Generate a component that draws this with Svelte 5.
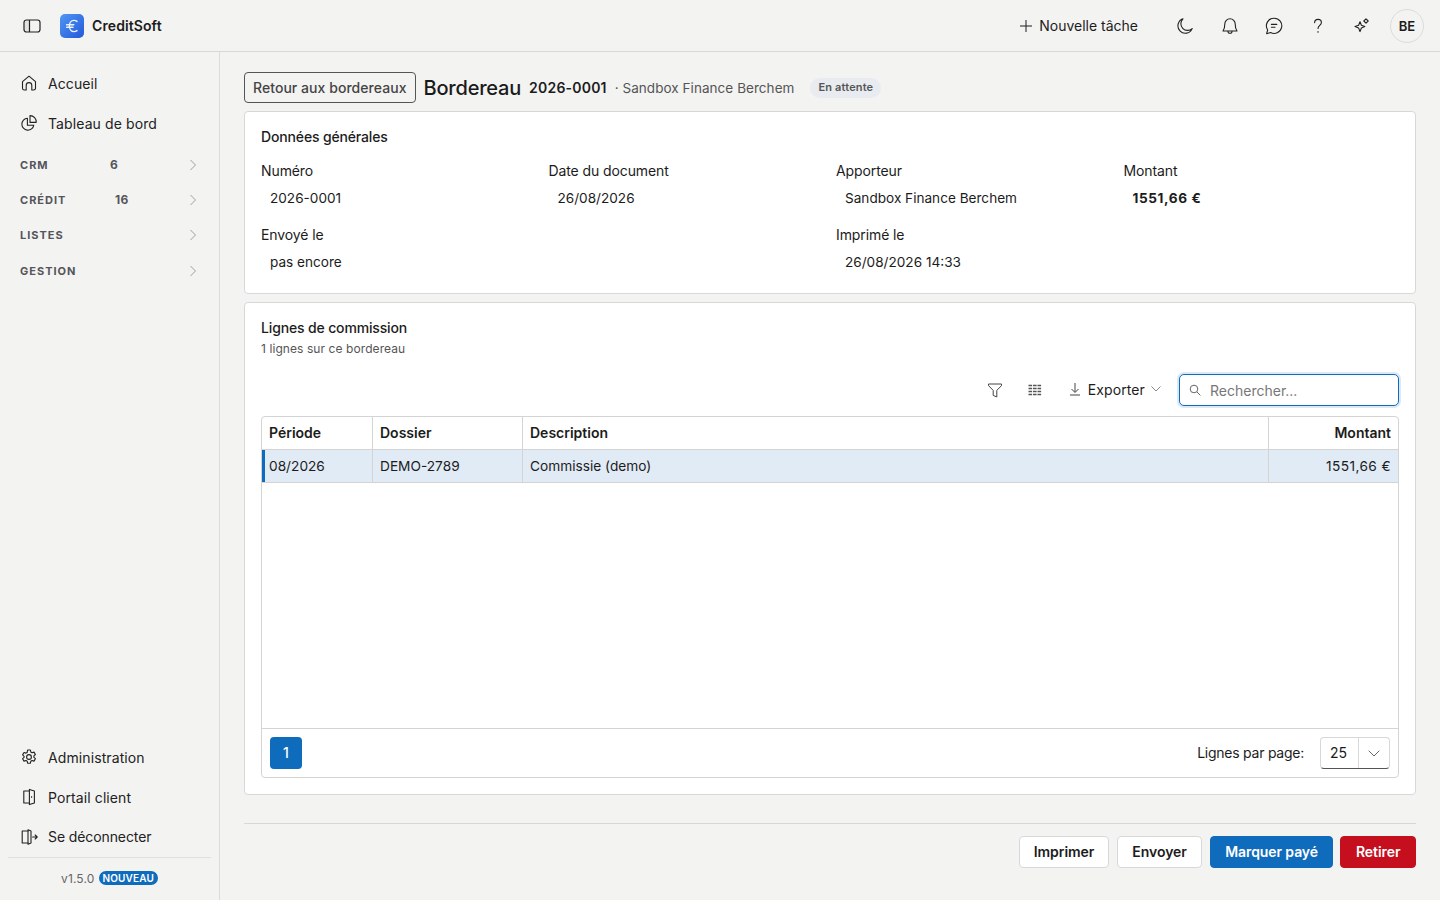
<script lang="ts">
  const fields = [
    { label: 'Numéro', value: '2026-0001' },
    { label: 'Date du document', value: '26/08/2026' },
    { label: 'Apporteur', value: 'Sandbox Finance Berchem' },
    { label: 'Montant', value: '1551,66 €', strong: true },
    { label: 'Envoyé le', value: 'pas encore', wide: true },
    { label: 'Imprimé le', value: '26/08/2026 14:33', wide: true }
  ];
  const groups = [
    { name: 'CRM', count: '6', width: 90 },
    { name: 'CRÉDIT', count: '16', width: 95 },
    { name: 'LISTES', count: '' },
    { name: 'GESTION', count: '' }
  ];
</script>

<div class="app">
  <header class="topbar">
    <button class="icon-btn toggle" aria-label="Menu">
      <svg width="18" height="18" viewBox="0 0 18 18" fill="none" stroke="currentColor" stroke-width="1.2"><rect x="1" y="3" width="16" height="12" rx="2.5"/><path d="M6.5 3v12"/><path d="M1.5 5.5A2 2 0 0 1 3.5 3.5h3v11h-3a2 2 0 0 1-2-2z" fill="currentColor" fill-opacity=".08" stroke="none"/></svg>
    </button>
    <div class="logo">
      <svg width="24" height="24" viewBox="0 0 24 24" fill="none">
        <defs><linearGradient id="lg" x1="0" y1="0" x2="1" y2="1"><stop offset="0" stop-color="#4f97f5"/><stop offset="1" stop-color="#2458d8"/></linearGradient></defs>
        <rect width="24" height="24" rx="5" fill="url(#lg)"/>
        <path d="M17 7.4a5 5 0 0 0-3-1c-2.8 0-4.6 2.4-4.6 5.6s1.8 5.6 4.6 5.6c1.2 0 2.2-.4 3-1M6.6 10.7h7.2M6.6 13.3h6.4" stroke="#eaf3ff" stroke-width="1.4" stroke-linecap="round"/>
      </svg>
    </div>
    <span class="brand">CreditSoft</span>
    <div class="top-actions">
      <button class="new-task">
        <svg width="14" height="14" viewBox="0 0 14 14" fill="none" stroke="currentColor" stroke-width="1"><path d="M7 1v12M1 7h12"/></svg>
        Nouvelle tâche
      </button>
      <span class="icons">
        <svg width="18" height="18" viewBox="0 0 18 18" fill="none" stroke="currentColor" stroke-width="1.1" stroke-linejoin="round"><path d="M6 1.8a7.4 7.4 0 1 0 9.2 9.8A6.6 6.6 0 0 1 6 1.8z"/></svg>
        <svg width="18" height="18" viewBox="0 0 18 18" fill="none" stroke="currentColor" stroke-width="1.1" stroke-linejoin="round" stroke-linecap="round"><path d="M3.8 7a5.2 5.2 0 0 1 10.4 0c0 3.4.6 5.4 1.8 7H2c1.2-1.6 1.8-3.6 1.8-7z"/><path d="M7 14.2c0 2.8 4 2.8 4 0"/></svg>
        <svg width="18" height="18" viewBox="0 0 18 18" fill="none" stroke="currentColor" stroke-width="1.1" stroke-linejoin="round" stroke-linecap="round"><path d="M9.2 1.2a7.6 7.6 0 1 1-3.6 14.3l-4 1.2 1.1-3.7A7.6 7.6 0 0 1 9.2 1.2z"/><path d="M6.4 7.4h5.4M6.4 10.2h3.6"/></svg>
        <svg width="18" height="18" viewBox="0 0 18 18" fill="none" stroke="currentColor" stroke-width="1.1" stroke-linecap="round"><path d="M5.6 5.6C5.7 3.6 7.2 2.4 9 2.4c2 0 3.4 1.2 3.4 3 0 2.8-3.4 3-3.4 6"/><path d="M9 14.6v.6"/></svg>
        <svg width="18" height="18" viewBox="0 0 18 18" fill="none" stroke="currentColor" stroke-width="1.1" stroke-linejoin="round"><path d="M7 4.8l1.4 3.4 3.4 1.4-3.4 1.4L7 14.6l-1.4-3.6L2 9.6l3.6-1.4z"/><path d="M13 1.8l2.2 2.2-2.2 2.2L10.8 4z"/></svg>
      </span>
      <span class="avatar">BE</span>
    </div>
  </header>

  <div class="shell">
    <aside class="sidebar">
      <nav class="nav-top">
        <a class="nav-item">
          <svg width="18" height="18" viewBox="0 0 18 18" fill="none" stroke="currentColor" stroke-width="1.1" stroke-linejoin="round"><path d="M2.5 7.6 9 2.2l6.5 5.4v6.6a1.8 1.8 0 0 1-1.8 1.8h-1.9v-4.6a2.8 2.8 0 0 0-5.6 0V16H4.3a1.8 1.8 0 0 1-1.8-1.8z"/></svg>
          Accueil
        </a>
        <a class="nav-item">
          <svg width="18" height="18" viewBox="0 0 18 18" fill="none" stroke="currentColor" stroke-width="1.1" stroke-linejoin="round"><path d="M7.4 4.2a6 6 0 1 0 6.4 7H7.4z"/><path d="M10 1.6a6.2 6.2 0 0 1 6.2 6.8H10z"/></svg>
          Tableau de bord
        </a>
        <div class="groups">
          {#each groups as g}
            <div class="group">
              <span class="group-name" style={g.width ? `width:${g.width}px` : ''}>{g.name}</span>
              {#if g.count}<span class="group-count">{g.count}</span>{/if}
              <svg class="chev" width="8" height="12" viewBox="0 0 8 12" fill="none" stroke="currentColor" stroke-width="1"><path d="M1.5 1l5 5-5 5"/></svg>
            </div>
          {/each}
        </div>
      </nav>
      <nav class="nav-bottom">
        <a class="nav-item">
          <svg width="18" height="18" viewBox="0 0 18 18" fill="none" stroke="currentColor" stroke-width="1.1" stroke-linejoin="round"><path d="M7.6 2h2.8l.4 2 1.2.7 2-.6 1.4 2.4-1.5 1.4v1.4l1.5 1.4-1.4 2.4-2-.6-1.2.7-.4 2H7.6l-.4-2-1.2-.7-2 .6-1.4-2.4 1.5-1.4V8.3L2.6 6.9 4 4.5l2 .6 1.2-.7z"/><circle cx="9" cy="9" r="2.4"/></svg>
          Administration
        </a>
        <a class="nav-item">
          <svg width="18" height="18" viewBox="0 0 18 18" fill="none" stroke="currentColor" stroke-width="1.1" stroke-linejoin="round"><path d="M9.4 3H3.8v12h5.6"/><path d="M9.4 1.4l5 1.6v12l-5 1.6z"/><path d="M11.6 8.2v1.6"/></svg>
          Portail client
        </a>
        <a class="nav-item logout">
          <svg width="18" height="18" viewBox="0 0 18 18" fill="none" stroke="currentColor" stroke-width="1.1" stroke-linejoin="round" stroke-linecap="round"><path d="M8 3H2.2v12H8"/><path d="M8 1.8l3 1.2v12l-3 1.2z"/><path d="M12.6 9h4.6M15.2 7l2 2-2 2"/></svg>
          Se déconnecter
        </a>
        <div class="version">v1.5.0 <span class="new">NOUVEAU</span></div>
      </nav>
    </aside>

    <main class="main">
      <div class="title-row">
        <button class="back">Retour aux bordereaux</button>
        <h1>Bordereau</h1>
        <span class="num">2026-0001</span>
        <span class="who">· Sandbox Finance Berchem</span>
        <span class="tag">En attente</span>
      </div>

      <section class="card general">
        <h2>Données générales</h2>
        <div class="fields">
          {#each fields as f}
            <div class="field" class:wide={f.wide}>
              <div class="label">{f.label}</div>
              <div class="value" class:strong={f.strong}>{f.value}</div>
            </div>
          {/each}
        </div>
      </section>

      <section class="card lines">
        <h2>Lignes de commission</h2>
        <p class="sub">1 lignes sur ce bordereau</p>
        <div class="toolbar">
          <svg class="tool" width="16" height="16" viewBox="0 0 16 16" fill="none" stroke="currentColor" stroke-width="1" stroke-linejoin="round"><path d="M1.5 2h13v1.6L9.8 8.4V15l-3.6-1.6V8.4L1.5 3.6z"/></svg>
          <svg class="tool grid-ic" width="16" height="16" viewBox="0 0 16 16" fill="none" stroke="currentColor" stroke-width="1.3" stroke-dasharray="3.6 .9"><path d="M1.5 3.5h13M1.5 6.5h13M1.5 9.5h13M1.5 12.5h13"/></svg>
          <button class="export">
            <svg class="dl" width="14" height="14" viewBox="0 0 14 14" fill="none" stroke="currentColor" stroke-width="1"><path d="M7 1v9M3.5 7 7 10.5 10.5 7M2 13h10"/></svg>
            Exporter
            <svg class="caret" width="10" height="6" viewBox="0 0 10 6" fill="none" stroke="currentColor" stroke-width="1"><path d="M.5.5 5 5 9.5.5"/></svg>
          </button>
          <div class="search">
            <svg width="12" height="12" viewBox="0 0 12 12" fill="none" stroke="currentColor" stroke-width="1"><circle cx="5" cy="5" r="3.8"/><path d="m8 8 3.4 3.4"/></svg>
            <span>Rechercher...</span>
          </div>
        </div>

        <div class="table">
          <div class="thead row">
            <div class="c period">Période</div>
            <div class="c dossier">Dossier</div>
            <div class="c desc">Description</div>
            <div class="c amount">Montant</div>
          </div>
          <div class="tbody row selected">
            <div class="c period">08/2026</div>
            <div class="c dossier">DEMO-2789</div>
            <div class="c desc">Commissie (demo)</div>
            <div class="c amount">1551,66 €</div>
          </div>
          <div class="empty"></div>
          <div class="paginator">
            <button class="page">1</button>
            <span class="per-label">Lignes par page:</span>
            <div class="per">
              <span class="per-val">25</span>
              <span class="per-btn"><svg width="12" height="7" viewBox="0 0 12 7" fill="none" stroke="currentColor" stroke-width="1"><path d="M.7.7 6 6l5.3-5.3"/></svg></span>
            </div>
          </div>
        </div>
      </section>

      <footer class="actions">
        <button class="btn">Imprimer</button>
        <button class="btn">Envoyer</button>
        <button class="btn primary">Marquer payé</button>
        <button class="btn danger">Retirer</button>
      </footer>
    </main>
  </div>
</div>

<style>
  :global(body) { background: #f3f3f2; }
  .app {
    height: 900px; width: 1440px; overflow: hidden;
    display: flex; flex-direction: column;
    font-family: Inter, "Liberation Sans", sans-serif;
    font-size: 14px; color: #1c1c1c;
    background: #f3f3f2;
  }
  button { font-family: inherit; }

  .topbar {
    height: 52px; box-sizing: border-box;
    display: flex; align-items: center;
    border-bottom: 1px solid #d8d8d8;
    padding: 0 16px 0 23px;
  }
  .icon-btn { background: none; border: 0; padding: 0; display: flex; color: #222; }
  .logo { display: flex; margin-left: 19px; }
  .brand { margin-left: 8px; font-weight: 600; font-size: 14px; letter-spacing: 0.1px; }
  .top-actions { margin-left: auto; display: flex; align-items: center; }
  .new-task {
    display: flex; align-items: center; gap: 6px;
    background: none; border: 0; padding: 0; color: #1c1c1c; font-size: 14px;
  }
  .icons { display: flex; gap: 26px; margin-left: 39px; color: #222; }
  .avatar {
    width: 32px; height: 32px; margin-left: 19px;
    border: 1px solid #dcdcdc; border-radius: 50%;
    display: flex; align-items: center; justify-content: center;
    font-size: 13px; font-weight: 600;
  }

  .shell { flex: 1; display: flex; min-height: 0; }
  .sidebar {
    width: 220px; box-sizing: border-box;
    border-right: 1px solid #dcdcdf;
    display: flex; flex-direction: column; justify-content: space-between;
    padding: 11px 8px 0 8px;
  }
  .nav-item {
    display: flex; align-items: center; gap: 10px;
    height: 40px; padding-left: 12px;
    color: #222; font-size: 14px; letter-spacing: 0.1px;
  }
  .nav-item.logout { height: 39px; padding-bottom: 1px; letter-spacing: -0.1px; }
  .groups { margin-top: 4px; }
  .group {
    height: 35.3px; display: flex; align-items: center;
    padding: 0 14px 0 12px;
    font-size: 11px; font-weight: 700; letter-spacing: 1px; color: #55555a;
  }
  .group-count { font-size: 12px; letter-spacing: 0.4px; }
  .chev { margin-left: auto; color: #a0a0a4; }
  .nav-bottom { display: flex; flex-direction: column; }
  .version {
    border-top: 1px solid #dfe0e3;
    height: 43px; box-sizing: border-box; padding-bottom: 2px;
    display: flex; align-items: center; justify-content: center; gap: 4px;
    font-size: 12px; color: #666; letter-spacing: 0.15px;
  }
  .new {
    background: #0f6cbd; color: #fff; border-radius: 8px;
    padding: 0 4px; font-size: 10px; font-weight: 600; line-height: 14px;
  }

  .main {
    flex: 1; min-width: 0; box-sizing: border-box;
    padding: 20px 24px 0;
    display: flex; flex-direction: column;
  }
  .title-row { display: flex; align-items: center; height: 31px; margin-bottom: 8px; }
  .back {
    height: 31px; box-sizing: border-box; padding: 0 8px;
    background: none; border: 1px solid #555; border-radius: 4px;
    font-size: 14px; font-weight: 500; color: #444; letter-spacing: 0.05px;
  }
  h1 { margin: 0 0 0 8px; font-size: 20px; font-weight: 500; letter-spacing: -0.2px; color: #1a1a1a; }
  .num { margin-left: 8px; font-weight: 600; font-size: 14px; letter-spacing: 0.2px; }
  .who { margin-left: 8px; color: #555; font-size: 13.5px; letter-spacing: 0.05px; }
  .tag {
    margin-left: 16px; height: 20px; padding: 0 8px 1px; box-sizing: border-box;
    display: flex; align-items: center;
    background: #e8ebef; border-radius: 10px;
    font-size: 11px; font-weight: 600; color: #555; letter-spacing: 0.15px;
  }

  .card {
    background: #fff; border: 1px solid #d8d8d8; border-radius: 4px;
    box-sizing: border-box; padding: 16px;
  }
  h2 { margin: 0; font-size: 14px; font-weight: 500; line-height: 18px; color: #1c1c1c; letter-spacing: -0.15px; }
  .general { height: 183px; margin-bottom: 8px; }
  .fields {
    display: grid; grid-template-columns: repeat(4, 1fr); column-gap: 12px;
    margin-top: 16px; row-gap: 19px;
  }
  .field.wide { grid-column: span 2; }
  .label { line-height: 18px; letter-spacing: -0.1px; }
  .value { padding: 9px 9px 0; line-height: 18px; font-size: 13.6px; }
  .value.strong { font-weight: 700; letter-spacing: 0.6px; }

  .lines { height: 493px; display: flex; flex-direction: column; }
  .sub { margin: 4px 0 0; font-size: 12px; line-height: 16px; color: #555; letter-spacing: 0.08px; }
  .toolbar {
    display: flex; align-items: center; justify-content: flex-end;
    margin-top: 17px; height: 32px; color: #444;
  }
  .grid-ic { margin-left: 24px; color: #555; }
  .export {
    margin-left: 25px; display: flex; align-items: center; gap: 7px;
    background: none; border: 0; padding: 0 0 2px; font-size: 14px; color: #1c1c1c; letter-spacing: 0.1px;
  }
  .export svg { color: #444; }
  .dl { margin-right: -1px; }
  .caret { margin-left: -1px; color: #888 !important; }
  .search {
    margin-left: 18px; width: 220px; height: 32px; box-sizing: border-box;
    display: flex; align-items: center; gap: 9px; padding-left: 9px;
    border: 1.5px solid #0f6cbd; border-radius: 5px;
    box-shadow: 0 0 0 2px #dbe8f6;
    color: #666; font-size: 14px; background: #fff;
  }
  .search span { color: #777; }

  .table {
    margin-top: 10px; flex: 1;
    border: 1px solid #d4d4d4; border-radius: 4px;
    display: flex; flex-direction: column; overflow: hidden;
  }
  .row {
    display: grid; grid-template-columns: 111px 150px 746px 1fr;
    height: 33px; box-sizing: border-box; border-bottom: 1px solid #d4d4d4;
    flex: none; font-size: 13.7px;
  }
  .c {
    padding: 0 7px 2px; display: flex; align-items: center;
    border-right: 1px solid #d4d4d4;
  }
  .c:last-child { border-right: 0; justify-content: flex-end; }
  .thead { font-weight: 600; font-size: 14px; }
  .selected { background: #e1ebf6; box-shadow: inset 3px 0 0 #0f6cbd; }
  .selected .c { padding-bottom: 0; }
  .selected .amount { letter-spacing: 0.4px; }
  .empty { flex: 1; }
  .paginator {
    height: 49px; box-sizing: border-box; flex: none;
    border-top: 1px solid #d4d4d4;
    display: flex; align-items: center; padding: 0 8px;
  }
  .page {
    width: 32px; height: 32px; background: #0f6cbd; color: #fff;
    border: 0; border-radius: 4px; font-size: 14px; font-weight: 500; padding: 0 0 1px;
  }
  .per-label { margin-left: auto; letter-spacing: -0.25px; padding-bottom: 1px; }
  .per {
    margin-left: 16px; width: 70px; height: 32px; box-sizing: border-box;
    display: flex; border: 1px solid #d8d8d8; border-bottom-color: #555; border-radius: 4px;
  }
  .per-val { flex: 1; display: flex; align-items: center; padding: 0 0 1px 9px; border-right: 1px solid #d8d8d8; }
  .per-btn { width: 30px; display: flex; align-items: center; justify-content: center; color: #666; }

  .actions {
    margin-top: 28px; border-top: 1px solid #d8d8d8; padding-top: 12px;
    display: flex; justify-content: flex-end; gap: 8px;
  }
  .btn {
    height: 32px; padding: 0 14px 2px;
    background: #fff; border: 1px solid #d8d8d8; border-radius: 4px;
    font-size: 14px; font-weight: 600; color: #1c1c1c; letter-spacing: -0.05px;
  }
  .btn.primary { background: #0f6cbd; border-color: #0f6cbd; color: #fff; letter-spacing: -0.1px; padding: 0 14.5px 2px; }
  .btn.danger { background: #c50f1f; border-color: #c50f1f; color: #fff; margin-left: -1px; padding: 0 14.5px 2px; }
</style>
